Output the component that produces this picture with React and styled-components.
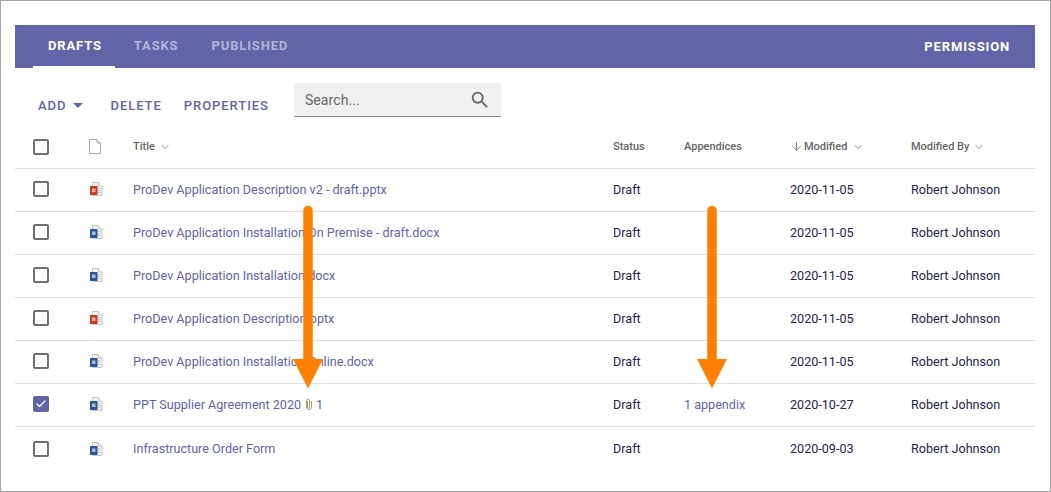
import React from "react";
import styled, { createGlobalStyle } from "styled-components";
import { ChevronDown, ArrowDown, Check } from "lucide-react";

const GlobalStyle = createGlobalStyle`
  html, body {
    margin: 0;
    padding: 0;
    background: #fff;
    font-family: Roboto, "Liberation Sans", sans-serif;
  }
`;

const Frame = styled.div`
  position: relative;
  box-sizing: border-box;
  width: 1051px;
  height: 492px;
  padding: 24px 15px 0 14px;
  border: 1px solid #a6a6a6;
  overflow: hidden;
`;

const TabBar = styled.div`
  display: flex;
  justify-content: space-between;
  align-items: stretch;
  height: 43px;
  padding: 0 25px 0 18px;
  background: #6264a7;
`;

const Tabs = styled.div`
  display: flex;
`;

const Tab = styled.div`
  display: flex;
  align-items: center;
  box-sizing: border-box;
  height: 43px;
  padding: ${(p) => p.$padding};
  border-bottom: 2px solid ${(p) => (p.$active ? "#fff" : "transparent")};
  color: ${(p) => (p.$active ? "#fff" : "#b4b5d6")};
  font-size: 13px;
  font-weight: 700;
  letter-spacing: 0.85px;
`;

const Permission = styled.div`
  display: flex;
  align-items: center;
  color: #fff;
  font-size: 13px;
  font-weight: 700;
  letter-spacing: 0.85px;
`;

const Toolbar = styled.div`
  display: flex;
  align-items: flex-start;
  height: 58px;
  padding: 15px 0 0 23px;
  box-sizing: border-box;
`;

const ToolButton = styled.div`
  display: flex;
  align-items: center;
  height: 15px;
  margin: 15px ${(p) => p.$gap} 0 0;
  color: #6264a7;
  font-size: 13px;
  font-weight: 500;
  letter-spacing: 0.95px;
`;

const Caret = styled.span`
  width: 0;
  height: 0;
  margin-left: 7px;
  border-left: 5px solid transparent;
  border-right: 5px solid transparent;
  border-top: 5px solid #6264a7;
`;

const SearchBox = styled.div`
  display: flex;
  align-items: center;
  justify-content: space-between;
  box-sizing: border-box;
  width: 207px;
  height: 34px;
  padding: 0 10px 0 11px;
  background: #f0f0f0;
  border-bottom: 1px solid #8a8a8a;
  border-radius: 3px 3px 0 0;
  color: #666;
  font-size: 14px;
  letter-spacing: 0.1px;
`;

const Row = styled.div`
  display: grid;
  grid-template-columns: 56px 44px 480px 71px 106px 121px 1fr;
  align-items: center;
  box-sizing: border-box;
  height: 43px;
  padding: 0 0 ${(p) => (p.$last ? "0" : p.$header ? "1px" : "2px")} 18px;
  border-bottom: ${(p) => (p.$last ? "0" : "1px solid #e0e0e0")};
  font-size: 12.6px;
  color: #25254a;
`;

const HeadCell = styled.div`
  display: flex;
  align-items: center;
  color: #666;
  font-size: 11px;
  font-weight: 500;

  svg {
    flex: none;
  }
`;

const Box = styled.span`
  display: flex;
  align-items: center;
  justify-content: center;
  box-sizing: border-box;
  width: 16px;
  height: 16px;
  border: 2px solid ${(p) => (p.$checked ? "#6264a7" : "#707070")};
  border-radius: 2px;
  background: ${(p) => (p.$checked ? "#6264a7" : "#fff")};
`;

const TitleLink = styled.div`
  display: flex;
  align-items: center;
  color: #6264a7;
`;

const AttachCount = styled.span`
  display: inline-flex;
  align-items: center;
  margin-left: 4px;
  color: #6264a7;

  svg {
    margin-right: 4px;
  }
`;

const Appendix = styled.span`
  color: #6264a7;
`;

const ArrowMark = styled.svg`
  position: absolute;
  left: ${(p) => p.$left}px;
  top: 204px;
`;

const SearchIcon = () => (
  <svg width="22" height="22" viewBox="0 0 24 24" fill="#666">
    <path d="M15.5 14h-.79l-.28-.27A6.471 6.471 0 0 0 16 9.5 6.5 6.5 0 1 0 9.5 16c1.61 0 3.09-.59 4.23-1.57l.27.28v.79l5 4.99L20.49 19l-4.99-5zm-6 0C7.01 14 5 11.99 5 9.500S7.010 5 9.500 5 14 7.010 14 9.500 11.990 14 9.500 14z" />
  </svg>
);

const FileIcon = ({ kind }) => {
  const color = kind === "ppt" ? "#c43e1c" : "#2b579a";
  return (
    <svg width="14" height="14" viewBox="0 0 14 14">
      <path d="M3.500.5h6l3.500 3.500v9.500h-9.500z" fill="#f4f4f4" stroke="#c4c4c4" />
      <path d="M9.500.5v3.500h3.500" fill="#fff" stroke="#c4c4c4" />
      <path d="M8.500 6.500h3M8.500 8.500h3M8.500 10.500h3" stroke="#c8c8c8" />
      <rect x="1" y="4" width="7.500" height="9" rx="0.500" fill={color} />
      <rect x="3" y="6.500" width="3.500" height="3.500" fill="#fff" opacity="0.600" />
    </svg>
  );
};

const BlankFile = () => (
  <svg width="14" height="15" viewBox="0 0 14 15">
    <path d="M.5.5h7.500l3.500 3.500v10.500h-11z" fill="#fff" stroke="#a8a8a8" />
    <path d="M8 .5v3.500h3.500" fill="none" stroke="#a8a8a8" />
  </svg>
);

const ClipIcon = () => (
  <svg width="7" height="12" viewBox="0 0 7 12" fill="none">
    <path d="M2.500 3v6a1 1 0 0 0 2 0V2.500a1.500 1.500 0 0 0-3 0V9a2.500 2.500 0 0 0 5 0V3" stroke="#a08f6a" strokeWidth="0.900" />
  </svg>
);

const OrangeArrow = ({ left }) => (
  <ArrowMark $left={left} width="32" height="186" viewBox="0 0 32 186">
    <path d="M16 5.500v155" stroke="#ff8000" strokeWidth="9.500" strokeLinecap="round" />
    <path d="M1 154h30l-15 29.500z" fill="#ff8000" />
  </ArrowMark>
);

const rows = [
  { kind: "ppt", title: "ProDev Application Description v2 - draft.pptx", date: "2020-11-05" },
  { kind: "doc", title: "ProDev Application Installation On Premise - draft.docx", date: "2020-11-05" },
  { kind: "doc", title: "ProDev Application Installation.docx", date: "2020-11-05" },
  { kind: "ppt", title: "ProDev Application Description.pptx", date: "2020-11-05" },
  { kind: "doc", title: "ProDev Application Installation Online.docx", date: "2020-11-05" },
  { kind: "doc", title: "PPT Supplier Agreement 2020", date: "2020-10-27", checked: true, attachments: 1, appendix: "1 appendix" },
  { kind: "doc", title: "Infrastructure Order Form", date: "2020-09-03" },
];

export default function App() {
  return (
    <Frame>
      <GlobalStyle />
      <TabBar>
        <Tabs>
          <Tab $active $padding="0 13px 0 15px">DRAFTS</Tab>
          <Tab $padding="0 15px 0 19px">TASKS</Tab>
          <Tab $padding="0 15px 0 18px">PUBLISHED</Tab>
        </Tabs>
        <Permission>PERMISSION</Permission>
      </TabBar>

      <Toolbar>
        <ToolButton $gap="27px">
          ADD
          <Caret />
        </ToolButton>
        <ToolButton $gap="22px">DELETE</ToolButton>
        <ToolButton $gap="25px">PROPERTIES</ToolButton>
        <SearchBox>
          Search...
          <SearchIcon />
        </SearchBox>
      </Toolbar>

      <Row $header>
        <Box />
        <BlankFile />
        <HeadCell>
          Title
          <ChevronDown size={12} strokeWidth={1.5} style={{ marginLeft: 4 }} />
        </HeadCell>
        <HeadCell>Status</HeadCell>
        <HeadCell>Appendices</HeadCell>
        <HeadCell>
          <ArrowDown size={13} strokeWidth={1.5} style={{ marginRight: 1 }} />
          Modified
          <ChevronDown size={12} strokeWidth={1.5} style={{ marginLeft: 5 }} />
        </HeadCell>
        <HeadCell>
          Modified By
          <ChevronDown size={12} strokeWidth={1.5} style={{ marginLeft: 4 }} />
        </HeadCell>
      </Row>

      {rows.map((row, i) => (
        <Row key={row.title} $last={i === rows.length - 1}>
          <Box $checked={row.checked}>
            {row.checked && <Check size={14} color="#fff" strokeWidth={2.5} />}
          </Box>
          <FileIcon kind={row.kind} />
          <TitleLink>
            {row.title}
            {row.attachments && (
              <AttachCount>
                <ClipIcon />
                {row.attachments}
              </AttachCount>
            )}
          </TitleLink>
          <span>Draft</span>
          <Appendix>{row.appendix}</Appendix>
          <span>{row.date}</span>
          <span>Robert Johnson</span>
        </Row>
      ))}

      <OrangeArrow left={291} />
      <OrangeArrow left={695} />
    </Frame>
  );
}
